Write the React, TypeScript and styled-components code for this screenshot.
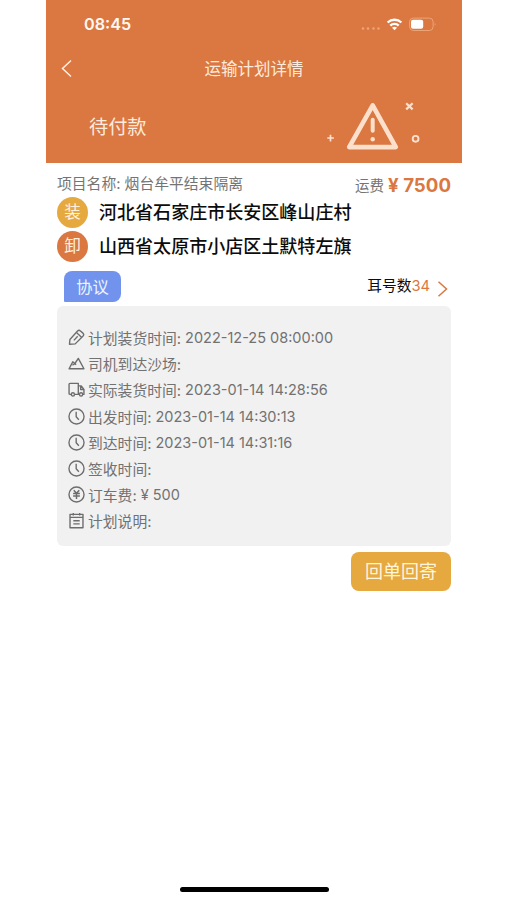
import React from "react";
import styled, { createGlobalStyle } from "styled-components";

const GlobalStyle = createGlobalStyle`
  * { box-sizing: border-box; }
  body {
    margin: 0;
    background: #fff;
    font-family: Inter, "Noto Sans CJK SC", sans-serif;
    color: #0c0c0c;
  }
`;

const Screen = styled.div`
  width: 416px;
  height: 900px;
  margin-left: 46px;
  display: flex;
  flex-direction: column;
  white-space: nowrap;
`;

const Header = styled.header`
  height: 163px;
  background: #db7740;
  color: #fdebdd;
`;

const StatusBar = styled.div`
  height: 48px;
  padding: 0 26px 0 38px;
  display: flex;
  align-items: center;
  justify-content: space-between;
  color: #fff8f0;
`;

const Clock = styled.span`
  font-size: 16.2px;
  font-weight: 600;
  line-height: 20px;
`;

const NavBar = styled.div`
  height: 40px;
  padding: 0 15px;
  display: grid;
  grid-template-columns: 20px 1fr 20px;
  align-items: center;
`;

const Title = styled.h1`
  margin: 0;
  padding-top: 1px;
  font-size: 16.5px;
  font-weight: 400;
  line-height: 24px;
  text-align: center;
`;

const Banner = styled.div`
  height: 75px;
  padding: 0 38px 0 43px;
  display: flex;
  justify-content: space-between;
`;

const State = styled.div`
  font-size: 19.2px;
  line-height: 28px;
  padding-top: 25px;
`;

const Illustration = styled.div`
  padding-top: 10px;
`;

const Body = styled.main`
  padding: 8px 11px 0;
  display: flex;
  flex-direction: column;
`;

const Summary = styled.div`
  height: 24px;
  display: flex;
  justify-content: space-between;
  line-height: 26px;
  color: #747474;
`;

const Project = styled.div`
  font-size: 14.8px;
`;

const Freight = styled.div`
  display: flex;
  gap: 4px;
  padding-top: 2px;
  font-size: 14.5px;
`;

const Price = styled.strong`
  color: #db7740;
  font-size: 18.7px;
  font-weight: 700;
`;

const Stop = styled.div`
  height: 34px;
  display: flex;
  align-items: center;
  gap: 11px;
  font-size: 18.05px;
  font-weight: 500;
  line-height: 26px;
`;

const Place = styled.span`
  padding-top: 1px;
`;

const Tag = styled.span<{ $color: string }>`
  width: 31px;
  height: 31px;
  border-radius: 50%;
  background: ${(p) => p.$color};
  color: #fff1dc;
  font-size: 16.5px;
  font-weight: 400;
  line-height: 31px;
  text-align: center;
`;

const Links = styled.div`
  height: 43px;
  padding: 8px 3px 0 7px;
  display: flex;
  justify-content: space-between;
`;

const Agreement = styled.button`
  width: 57px;
  height: 31px;
  padding: 0;
  border: 0;
  border-radius: 8px 8px 8px 1px;
  background: #7193ed;
  color: #eef3ff;
  font: inherit;
  font-size: 16.3px;
  line-height: 32px;
`;

const EarTags = styled.div`
  display: flex;
  gap: 7px;
  font-size: 14.7px;
  line-height: 30px;

  em {
    font-style: normal;
    color: #db7740;
  }
  svg {
    margin-top: 9px;
  }
`;

const Panel = styled.section`
  height: 240px;
  padding: 19px 11px 0;
  border-radius: 6px;
  background: #f1f1f1;
`;

const Row = styled.div`
  height: 26.2px;
  display: flex;
  gap: 3px;
  color: #727272;
  line-height: 26px;

  svg {
    flex: none;
    margin-top: 4px;
  }
`;

const Label = styled.span`
  font-size: 14.8px;
  line-height: 28.8px;
`;

const Value = styled.span`
  font-size: 14.5px;
  margin-left: 1px;
`;

const ReturnButton = styled.button`
  align-self: flex-end;
  width: 100px;
  height: 39px;
  margin-top: 6px;
  padding: 0;
  border: 0;
  border-radius: 8px;
  background: #e6a93f;
  color: #fff5da;
  font: inherit;
  font-size: 18px;
  line-height: 39px;
`;

const HomeIndicator = styled.div`
  width: 149px;
  height: 5px;
  margin: auto auto 8px 134px;
  border-radius: 3px;
  background: #000;
`;

const StatusIcons = () => (
  <svg width="75" height="16" viewBox="361 16 75 16" fill="none">
    <g fill="#efa476">
      <circle cx="363" cy="28.5" r="1.3" />
      <circle cx="368" cy="28.5" r="1.3" />
      <circle cx="373.5" cy="28.5" r="1.3" />
      <circle cx="378.5" cy="28.5" r="1.3" />
    </g>
    <g stroke="#fff" strokeWidth="2.3">
      <path d="M387.6 22.5 A10 10 0 0 1 401.4 22.5" />
      <path d="M390.3 25.6 A6 6 0 0 1 398.7 25.6" />
    </g>
    <path d="M394.5 30.3 L392 27.8 Q394.5 25.9 397 27.8 Z" fill="#fff" />
    <rect x="409.6" y="18.1" width="23.5" height="12.4" rx="3.7" stroke="#efa476" />
    <path d="M434.7 22.5 q1.5 1.8 0 3.6Z" fill="#efa476" />
    <rect x="411" y="19.8" width="12.2" height="9" rx="2" fill="#fff" />
  </svg>
);

const BackIcon = () => (
  <svg width="12" height="20" viewBox="0 0 12 20" fill="none">
    <path d="M10 2.5 L1.5 10.5 L10 18.5" stroke="#ffefe2" strokeWidth="1.5" />
  </svg>
);

const WarningArt = () => (
  <svg width="97" height="56" viewBox="327 98 97 56" fill="none" stroke="#fce0cc">
    <path d="M372.7 105.3 L395.8 147.1 H349.2 Z" strokeWidth="4.6" strokeLinejoin="round" />
    <path d="M372.7 119.8 V130.7" strokeWidth="4" strokeLinecap="round" />
    <circle cx="372.7" cy="139.3" r="2.2" fill="#fce0cc" stroke="none" />
    <path d="M330.5 134.8 V141.4 M327.3 138 H333.9" strokeWidth="1.7" />
    <path d="M406.2 103.3 L412.6 109.4 M412.6 103.3 L406.2 109.4" strokeWidth="2.2" />
    <circle cx="415.6" cy="138.8" r="2.9" strokeWidth="1.9" />
  </svg>
);

const ArrowIcon = () => (
  <svg width="11" height="18" viewBox="0 0 11 18" fill="none">
    <path d="M1.5 1.7 L9.5 9 L1.5 16.2" stroke="#db7740" strokeWidth="1.5" />
  </svg>
);

type IconKind = "pencil" | "hill" | "truck" | "clock" | "yen" | "note";

const drawings: Record<IconKind, React.ReactNode> = {
  pencil: (
    <>
      <path d="M1.4 14.4 L1.8 9.9 L9 1.9 Q10.3 .6 11.7 1.8 L14.1 3.9 Q15.4 5.2 14.2 6.5 L6.8 14 Z" />
      <path d="M8.2 3.5 L12.7 7.7 M5.5 10.7 L9.1 6.8" />
    </>
  ),
  hill: (
    <path d="M1 12.9 L4.5 6.4 L6.5 8 L9.7 3.2 L15 12.9 Z M4.2 9.6 L6.5 8 L7.6 9.2" />
  ),
  truck: (
    <>
      <path d="M3.1 12.6 H1.9 Q1 12.6 1 11.7 V3.1 Q1 2.2 1.9 2.2 H9.7 V12.6 H6.1 M9.7 4.6 H12.5 L15 8 V12.6 H13.8 M10.8 12.6 H9.7 M11.9 4.8 V8 H15" />
      <circle cx="4.6" cy="12.6" r="1.5" />
      <circle cx="12.3" cy="12.6" r="1.5" />
    </>
  ),
  clock: (
    <>
      <circle cx="8" cy="8" r="7.1" />
      <path d="M7.7 3.6 V8.3 L10.2 11.1" />
    </>
  ),
  yen: (
    <>
      <circle cx="8" cy="8" r="7.1" />
      <path d="M5.4 3.9 L8 6.9 L10.6 3.9 M4.8 7 H11.2 M4.8 9.4 H11.2 M8 7 V12.2" strokeWidth="1.4" />
    </>
  ),
  note: (
    <>
      <path d="M1.9 2.2 H14.1 V14.8 H1.9 Z M1.9 5.1 H14.1 M5 .9 V3.4 M11 .9 V3.4" />
      <path d="M5 8.2 H11 M5 11.2 H11" />
    </>
  ),
};

const RowIcon = ({ kind }: { kind: IconKind }) => (
  <svg width="17" height="17" viewBox="0 0 16 16" fill="none" stroke="#6d6d6d" strokeWidth="1.3" strokeLinejoin="round">
    {drawings[kind]}
  </svg>
);

const rows: { icon: IconKind; label: string; value?: string }[] = [
  { icon: "pencil", label: "计划装货时间:", value: "2022-12-25 08:00:00" },
  { icon: "hill", label: "司机到达沙场:" },
  { icon: "truck", label: "实际装货时间:", value: "2023-01-14 14:28:56" },
  { icon: "clock", label: "出发时间:", value: "2023-01-14 14:30:13" },
  { icon: "clock", label: "到达时间:", value: "2023-01-14 14:31:16" },
  { icon: "clock", label: "签收时间:" },
  { icon: "yen", label: "订车费:", value: "¥ 500" },
  { icon: "note", label: "计划说明:" },
];

export default function App() {
  return (
    <>
      <GlobalStyle />
      <Screen>
        <Header>
          <StatusBar>
            <Clock>08:45</Clock>
            <StatusIcons />
          </StatusBar>
          <NavBar>
            <BackIcon />
            <Title>运输计划详情</Title>
          </NavBar>
          <Banner>
            <State>待付款</State>
            <Illustration>
              <WarningArt />
            </Illustration>
          </Banner>
        </Header>
        <Body>
          <Summary>
            <Project>项目名称: 烟台牟平结束隔离</Project>
            <Freight>
              运费<Price>¥ 7500</Price>
            </Freight>
          </Summary>
          <Stop>
            <Tag $color="#e6a93f">装</Tag>
            <Place>河北省石家庄市长安区峰山庄村</Place>
          </Stop>
          <Stop>
            <Tag $color="#db7740">卸</Tag>
            <Place>山西省太原市小店区土默特左旗</Place>
          </Stop>
          <Links>
            <Agreement>协议</Agreement>
            <EarTags>
              <span>
                耳号数<em>34</em>
              </span>
              <ArrowIcon />
            </EarTags>
          </Links>
          <Panel>
            {rows.map((row) => (
              <Row key={row.label}>
                <RowIcon kind={row.icon} />
                <Label>{row.label}</Label>
                {row.value && <Value>{row.value}</Value>}
              </Row>
            ))}
          </Panel>
          <ReturnButton>回单回寄</ReturnButton>
        </Body>
        <HomeIndicator />
      </Screen>
    </>
  );
}
